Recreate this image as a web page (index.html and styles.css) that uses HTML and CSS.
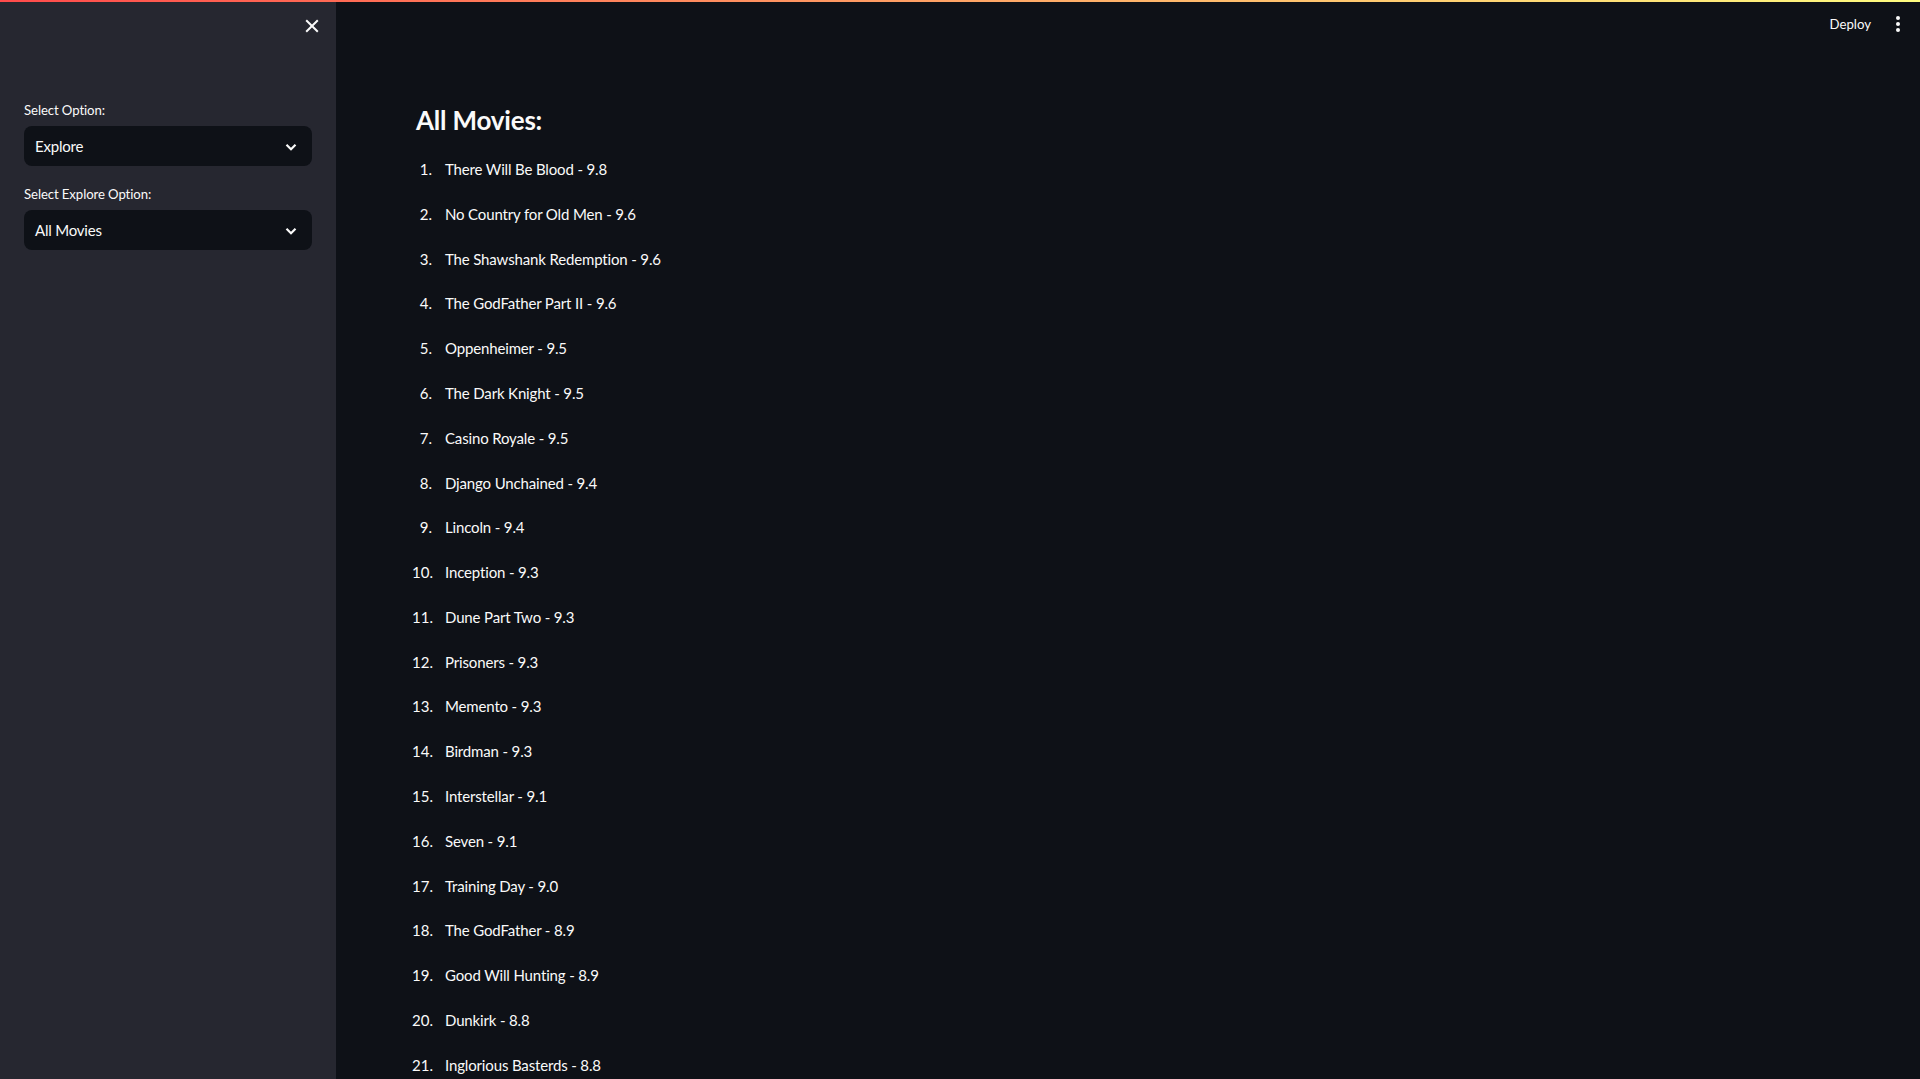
FILE: index.html
```html
<!DOCTYPE html>
<html lang="en">
<head>
<meta charset="utf-8">
<title>Movies</title>
<link rel="stylesheet" href="styles.css">
</head>
<body>
<div class="decoration"></div>
<div class="app">
  <aside class="sidebar">
    <div class="sidebar-header">
      <button class="close-btn" aria-label="Close sidebar">
        <svg viewBox="0 0 20 20" width="20" height="20"><path d="M4.2 4.2 15.8 15.8M15.8 4.2 4.2 15.8" stroke="currentColor" stroke-width="2" fill="none"/></svg>
      </button>
    </div>
    <div class="sidebar-content">
      <div class="widget">
        <label class="widget-label">Select Option:</label>
        <div class="select">
          <span class="select-value">Explore</span>
          <svg class="chevron" viewBox="0 0 12 8" width="12" height="8"><path d="M1.5 1.8 6 6.2l4.5-4.4" stroke="currentColor" stroke-width="2.2" fill="none"/></svg>
        </div>
      </div>
      <div class="widget">
        <label class="widget-label">Select Explore Option:</label>
        <div class="select">
          <span class="select-value">All Movies</span>
          <svg class="chevron" viewBox="0 0 12 8" width="12" height="8"><path d="M1.5 1.8 6 6.2l4.5-4.4" stroke="currentColor" stroke-width="2.2" fill="none"/></svg>
        </div>
      </div>
    </div>
  </aside>
  <main class="main">
    <header class="topbar">
      <span class="deploy">Deploy</span>
      <button class="menu-btn" aria-label="Main menu">
        <svg viewBox="0 0 6 18" width="6" height="18"><circle cx="3" cy="3" r="2" fill="currentColor"/><circle cx="3" cy="9" r="2" fill="currentColor"/><circle cx="3" cy="15" r="2" fill="currentColor"/></svg>
      </button>
    </header>
    <div class="block">
      <h3 class="title">All Movies:</h3>
      <ol class="movies">
        <li><span class="num">1.</span><span>There Will Be Blood - 9.8</span></li>
        <li><span class="num">2.</span><span>No Country for Old Men - 9.6</span></li>
        <li><span class="num">3.</span><span>The Shawshank Redemption - 9.6</span></li>
        <li><span class="num">4.</span><span>The GodFather Part II - 9.6</span></li>
        <li><span class="num">5.</span><span>Oppenheimer - 9.5</span></li>
        <li><span class="num">6.</span><span>The Dark Knight - 9.5</span></li>
        <li><span class="num">7.</span><span>Casino Royale - 9.5</span></li>
        <li><span class="num">8.</span><span>Django Unchained - 9.4</span></li>
        <li><span class="num">9.</span><span>Lincoln - 9.4</span></li>
        <li><span class="num">10.</span><span>Inception - 9.3</span></li>
        <li><span class="num">11.</span><span>Dune Part Two - 9.3</span></li>
        <li><span class="num">12.</span><span>Prisoners - 9.3</span></li>
        <li><span class="num">13.</span><span>Memento - 9.3</span></li>
        <li><span class="num">14.</span><span>Birdman - 9.3</span></li>
        <li><span class="num">15.</span><span>Interstellar - 9.1</span></li>
        <li><span class="num">16.</span><span>Seven - 9.1</span></li>
        <li><span class="num">17.</span><span>Training Day - 9.0</span></li>
        <li><span class="num">18.</span><span>The GodFather - 8.9</span></li>
        <li><span class="num">19.</span><span>Good Will Hunting - 8.9</span></li>
        <li><span class="num">20.</span><span>Dunkirk - 8.8</span></li>
        <li><span class="num">21.</span><span>Inglorious Basterds - 8.8</span></li>
      </ol>
    </div>
  </main>
</div>
</body>
</html>
```

FILE: styles.css
```css
* { box-sizing: border-box; }
html, body {
  margin: 0;
  padding: 0;
  height: 100%;
  overflow: hidden;
}
body {
  background: #0e1117;
  color: #fafafa;
  font-family: Lato, "Liberation Sans", sans-serif;
  font-size: 15px;
}
.decoration {
  position: fixed;
  top: 0;
  left: 0;
  right: 0;
  height: 2px;
  background: linear-gradient(90deg, #ff4b4b, #fffd80);
  z-index: 10;
}
.app {
  display: flex;
  height: 1079px;
}
.sidebar {
  width: 336px;
  flex: 0 0 336px;
  background: #262730;
  display: flex;
  flex-direction: column;
}
.sidebar-header {
  display: flex;
  justify-content: flex-end;
  padding: 16px 14px 0 0;
  height: 98px;
}
.close-btn, .menu-btn {
  background: none;
  border: none;
  color: #fafafa;
  padding: 0;
  display: flex;
  align-items: center;
  justify-content: center;
}
.close-btn {
  width: 20px;
  height: 20px;
}
.sidebar-content {
  padding: 0 24px;
  display: flex;
  flex-direction: column;
  gap: 16px;
}
.widget-label {
  display: flex;
  align-items: center;
  min-height: 24px;
  margin-bottom: 4px;
  font-size: 13.2px;
  letter-spacing: -0.1px;
  color: #fafafa;
}
.select {
  height: 40px;
  border-radius: 8px;
  background: #0e1117;
  display: flex;
  align-items: center;
  justify-content: space-between;
  padding: 0 15px 0 11px;
}
.select-value {
  font-size: 15px;
  letter-spacing: -0.2px;
}
.chevron {
  color: #fafafa;
  margin-top: 1px;
}
.main {
  flex: 1;
  display: flex;
  flex-direction: column;
  min-width: 0;
}
.topbar {
  height: 0;
  display: flex;
  justify-content: flex-end;
  align-items: flex-start;
  gap: 24px;
  padding-right: 19px;
}
.deploy {
  font-size: 13.2px;
  margin-top: 16px;
}
.menu-btn { margin-top: 15px; }
.block {
  padding: 96px 80px 0 80px;
}
.title {
  margin: 0;
  padding: 8px 0 16px 0;
  font-size: 26px;
  letter-spacing: -0.2px;
  font-weight: 700;
  line-height: 33.6px;
}
.movies {
  list-style: none;
  margin: 0 0 0 -4px;
  padding: 3.5px 0 0 0;
}
.movies li {
  display: grid;
  grid-template-columns: 20px 1fr;
  column-gap: 13px;
  line-height: 25.6px;
  margin-bottom: 19.2px;
  letter-spacing: -0.15px;
}
.num {
  text-align: right;
  letter-spacing: 0;
}
```
